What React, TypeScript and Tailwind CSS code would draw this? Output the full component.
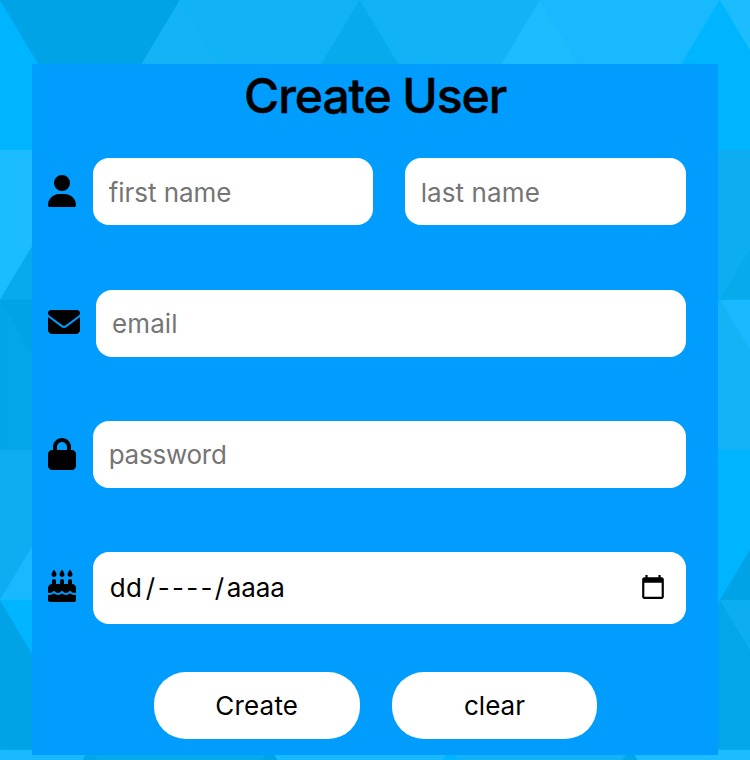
import { FaUser, FaEnvelope, FaLock, FaCakeCandles } from 'react-icons/fa6';

const tiles: [string, string][] = [
  ['0,0 90,150 0,150', '#00b5ff'],
  ['0,0 180,0 90,150', '#00a3e6'],
  ['180,0 270,150 90,150', '#13b3f6'],
  ['180,0 360,0 270,150', '#11b2f6'],
  ['360,0 450,150 270,150', '#07abec'],
  ['360,0 540,0 450,150', '#11b2f6'],
  ['540,0 630,150 450,150', '#1bbdff'],
  ['540,0 720,0 630,150', '#18b9fe'],
  ['720,0 810,150 630,150', '#00b5ff'],
  ['720,0 900,0 810,150', '#1bbdff'],
  ['0,150 90,150 0,300', '#1bbdff'],
  ['90,150 180,300 0,300', '#07abec'],
  ['630,150 810,150 720,300', '#0caef1'],
  ['810,150 900,300 720,300', '#07abec'],
  ['0,300 90,450 0,450', '#03a6e8'],
  ['0,300 180,300 90,450', '#00a3e6'],
  ['630,450 720,300 810,450', '#13b3f6'],
  ['720,300 900,300 810,450', '#18b9fe'],
  ['0,450 90,450 0,600', '#0caef1'],
  ['90,450 180,600 0,600', '#18b9fe'],
  ['630,450 810,450 720,600', '#00b5ff'],
  ['810,450 900,600 720,600', '#00a3e6'],
  ['0,600 90,750 0,750', '#00a3e6'],
  ['0,600 180,600 90,750', '#00b5ff'],
  ['630,750 720,600 810,750', '#03a6e8'],
  ['720,600 900,600 810,750', '#0caef1'],
  ['-90,750 90,750 0,900', '#18b9fe'],
  ['90,750 270,750 180,900', '#07abec'],
  ['270,750 450,750 360,900', '#18b9fe'],
  ['450,750 630,750 540,900', '#11b2f6'],
  ['630,750 810,750 720,900', '#1bbdff'],
  ['90,748 180,898 0,898', '#03a6e8'],
  ['270,748 360,898 180,898', '#00a3e6'],
  ['450,748 540,898 360,898', '#00b5ff'],
  ['630,748 720,898 540,898', '#03a6e8'],
];

const field =
  'h-[67px] min-w-0 rounded-2xl bg-white px-4 text-[26px] font-normal text-black outline-none placeholder:text-[#757575]';
const button =
  'h-[67px] rounded-[32px] bg-white text-[26px] font-normal text-black';

export default function App() {
  return (
    <div className="relative h-[760px] w-[750px] overflow-hidden bg-[#00b5ff] font-['Inter',sans-serif]">
      <svg className="absolute inset-0" width="750" height="760" shapeRendering="geometricPrecision">
        {tiles.map(([points, fill]) => (
          <polygon key={points} points={points} fill={fill} stroke={fill} strokeWidth="0.5" />
        ))}
      </svg>
      <form className="relative mt-16 ml-8 flex h-[691px] w-[686.3px] flex-col bg-[#009dff] pr-8 pl-4" onSubmit={(e) => e.preventDefault()}>
        <h1 className="mr-[-16px] h-[94.4px] pt-1 text-center text-[48px] leading-[56px] font-medium tracking-[-1.05px] [-webkit-text-stroke:0.5px_#000]">Create User</h1>
        <div className="flex h-[67.2px] items-center">
          <FaUser className="mt-[-2px] mr-[16.7px] h-8 w-7 shrink-0" />
          <input className={`${field} w-[280.3px] pt-0.5 tracking-[-0.05px]`} placeholder="first name" />
          <input className={`${field} ml-[31.7px] flex-1 pt-0.5 tracking-[0.1px]`} placeholder="last name" />
        </div>
        <div className="mt-16 flex h-[67.2px] items-center">
          <FaEnvelope className="mt-[-2px] mr-4 size-8 shrink-0" />
          <input className={`${field} flex-1 tracking-[0.1px]`} placeholder="email" />
        </div>
        <div className="mt-16 flex h-[67.2px] items-center">
          <FaLock className="mt-[-1px] mr-[16.7px] h-8 w-7 shrink-0" />
          <input className={`${field} flex-1 tracking-[-0.25px]`} placeholder="password" />
        </div>
        <div className="mt-16 flex h-[72px] items-center">
          <FaCakeCandles className="mt-[-4px] mr-[16.7px] h-8 w-7 shrink-0" />
          <div className="flex h-[72px] flex-1 items-center justify-between rounded-2xl bg-white pr-5 pl-[17px] text-[26px] font-normal">
            <div className="flex whitespace-nowrap">
              <span className="w-[36px] tracking-[0.5px]">dd</span>
              <span className="w-[12px]">/</span>
              <span className="w-[57px] tracking-[2.3px]">----</span>
              <span className="w-[12px]">/</span>
              <span className="tracking-[-0.1px]">aaaa</span>
            </div>
            <svg className="mt-[-2px]" width="26" height="26" viewBox="0 0 24 24">
              <path d="M20 3h-1V1h-2v2H7V1H5v2H4c-1.100 0-2 .9-2 2v16c0 1.100.9 2 2 2h16c1.100 0 2-.9 2-2V5c0-1.100-.9-2-2-2zm0 18H4V8h16v13z" />
            </svg>
          </div>
        </div>
        <div className="mt-[47.8px] ml-[105.500px] flex gap-8">
          <button className={`${button} w-[206.500px] tracking-[0.2px]`}>Create</button>
          <button className={`${button} w-[205px]`}>clear</button>
        </div>
      </form>
    </div>
  );
}
